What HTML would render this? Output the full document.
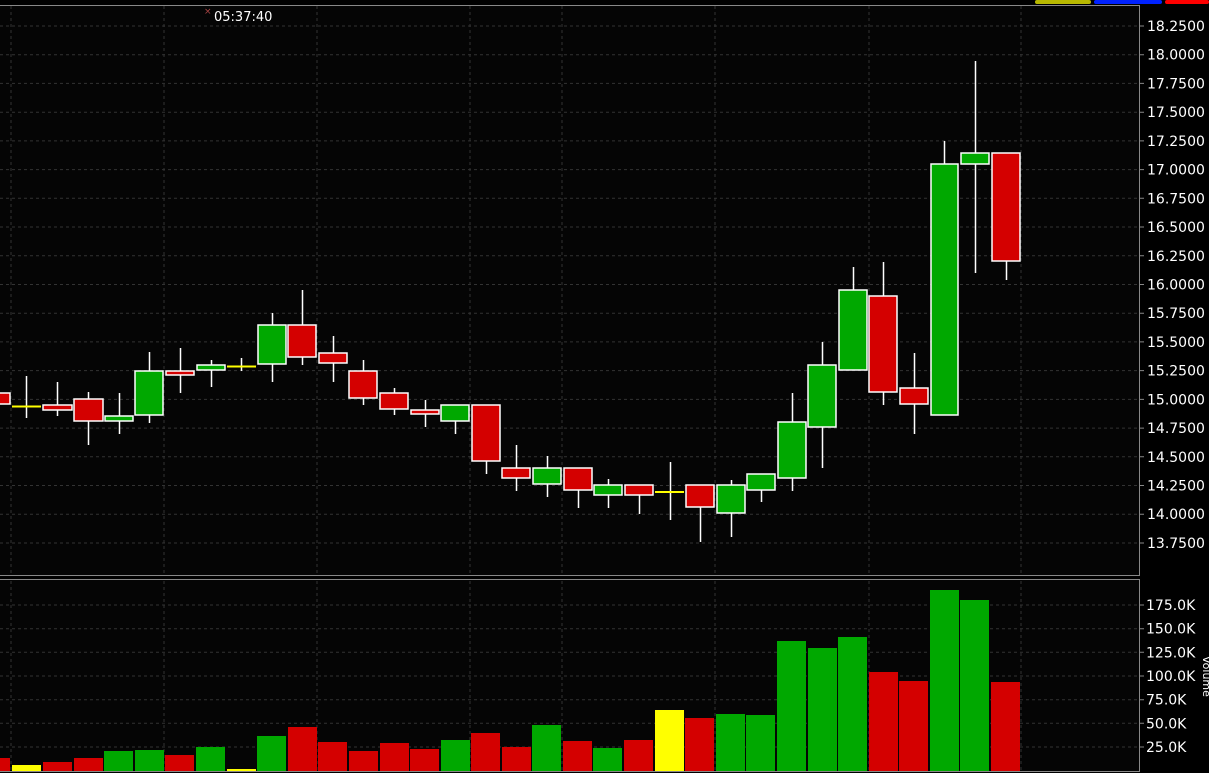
<!DOCTYPE html><html><head><style>body{margin:0;background:#000;overflow:hidden}svg{display:block}text{font-family:"DejaVu Sans","Liberation Sans",sans-serif;fill:#fff}</style></head><body>
<svg width="1209" height="773" xmlns="http://www.w3.org/2000/svg">
<rect width="1209" height="773" fill="#000"/>
<rect x="0" y="5" width="1139" height="570" fill="#050505"/>
<rect x="0" y="580" width="1139" height="191" fill="#050505"/>
<g stroke="#333" stroke-dasharray="3,3" stroke-width="1">
<path d="M11 6V575M164 6V575M317 6V575M470 6V575M562 6V575M715 6V575M869 6V575M1021 6V575M11 581V771M164 581V771M317 581V771M470 581V771M562 581V771M715 581V771M869 581V771M1021 581V771"/>
<path d="M0 26H1139M0 54.7H1139M0 83.4H1139M0 112.2H1139M0 140.9H1139M0 169.6H1139M0 198.3H1139M0 227H1139M0 255.8H1139M0 284.5H1139M0 313.2H1139M0 341.9H1139M0 370.6H1139M0 399.4H1139M0 428.1H1139M0 456.8H1139M0 485.5H1139M0 514.2H1139M0 543H1139"/>
<path d="M0 747H1139M0 723.3H1139M0 699.7H1139M0 676H1139M0 652.3H1139M0 628.7H1139M0 605H1139"/>
</g>
<g stroke="#888" fill="none"><path d="M0 5.5H1139.5V575.5H0"/><path d="M0 579.5H1139.5V771.5H0"/></g>
<rect x="1035" y="0" width="56" height="4" rx="2" fill="#b8b800"/><rect x="1094" y="0" width="68" height="4" rx="2" fill="#0022ff"/><rect x="1165" y="0" width="44" height="4" rx="2" fill="#ff0000"/>
<text x="204" y="14" font-size="9" fill="#a44" style="fill:#a44">×</text>
<text x="214" y="21" font-size="13">05:37:40</text>
<g font-size="14">
<text x="1147" y="31">18.2500</text><text x="1147" y="59.7">18.0000</text><text x="1147" y="88.4">17.7500</text><text x="1147" y="117.2">17.5000</text><text x="1147" y="145.9">17.2500</text><text x="1147" y="174.6">17.0000</text><text x="1147" y="203.3">16.7500</text><text x="1147" y="232">16.5000</text><text x="1147" y="260.8">16.2500</text><text x="1147" y="289.5">16.0000</text><text x="1147" y="318.2">15.7500</text><text x="1147" y="346.9">15.5000</text><text x="1147" y="375.6">15.2500</text><text x="1147" y="404.4">15.0000</text><text x="1147" y="433.1">14.7500</text><text x="1147" y="461.8">14.5000</text><text x="1147" y="490.5">14.2500</text><text x="1147" y="519.2">14.0000</text><text x="1147" y="548">13.7500</text>
<text x="1146" y="610">175.0K</text><text x="1146" y="633.7">150.0K</text><text x="1146" y="657.3">125.0K</text><text x="1146" y="681">100.0K</text><text x="1146" y="704.7">75.0K</text><text x="1146" y="728.3">50.0K</text><text x="1146" y="752">25.0K</text>
</g>
<text transform="translate(1203,656) rotate(90)" font-size="11">Volume</text>
<g stroke="#888"><path d="M1139 26h5M1139 54.7h5M1139 83.4h5M1139 112.2h5M1139 140.9h5M1139 169.6h5M1139 198.3h5M1139 227h5M1139 255.8h5M1139 284.5h5M1139 313.2h5M1139 341.9h5M1139 370.6h5M1139 399.4h5M1139 428.1h5M1139 456.8h5M1139 485.5h5M1139 514.2h5M1139 543h5M1139 605h5M1139 628.7h5M1139 652.3h5M1139 676h5M1139 699.7h5M1139 723.3h5M1139 747h5"/></g>
<!-- volume -->
<g>
<rect x="0" y="758" width="10" height="13" fill="#d40000"/>
<rect x="12" y="765" width="29" height="6" fill="#ffff00"/>
<rect x="43" y="762" width="29" height="9" fill="#d40000"/>
<rect x="74" y="758" width="29" height="13" fill="#d40000"/>
<rect x="104" y="751" width="29" height="20" fill="#00a800"/>
<rect x="135" y="750" width="29" height="21" fill="#00a800"/>
<rect x="165" y="755" width="29" height="16" fill="#d40000"/>
<rect x="196" y="747" width="29" height="24" fill="#00a800"/>
<rect x="227" y="769" width="29" height="2" fill="#ffff00"/>
<rect x="257" y="736" width="29" height="35" fill="#00a800"/>
<rect x="288" y="727" width="29" height="44" fill="#d40000"/>
<rect x="318" y="742" width="29" height="29" fill="#d40000"/>
<rect x="349" y="751" width="29" height="20" fill="#d40000"/>
<rect x="380" y="743" width="29" height="28" fill="#d40000"/>
<rect x="410" y="749" width="29" height="22" fill="#d40000"/>
<rect x="441" y="740" width="29" height="31" fill="#00a800"/>
<rect x="471" y="733" width="29" height="38" fill="#d40000"/>
<rect x="502" y="747" width="29" height="24" fill="#d40000"/>
<rect x="532" y="725" width="29" height="46" fill="#00a800"/>
<rect x="563" y="741" width="29" height="30" fill="#d40000"/>
<rect x="593" y="748" width="29" height="23" fill="#00a800"/>
<rect x="624" y="740" width="29" height="31" fill="#d40000"/>
<rect x="655" y="710" width="29" height="61" fill="#ffff00"/>
<rect x="685" y="718" width="29" height="53" fill="#d40000"/>
<rect x="716" y="714" width="29" height="57" fill="#00a800"/>
<rect x="746" y="715" width="29" height="56" fill="#00a800"/>
<rect x="777" y="641" width="29" height="130" fill="#00a800"/>
<rect x="808" y="648" width="29" height="123" fill="#00a800"/>
<rect x="838" y="637" width="29" height="134" fill="#00a800"/>
<rect x="869" y="672" width="29" height="99" fill="#d40000"/>
<rect x="899" y="681" width="29" height="90" fill="#d40000"/>
<rect x="930" y="590" width="29" height="181" fill="#00a800"/>
<rect x="960" y="600" width="29" height="171" fill="#00a800"/>
<rect x="991" y="682" width="29" height="89" fill="#d40000"/>
</g>
<!-- candles -->
<g stroke="#fff" stroke-width="1.5">
<path d="M26.5 376V418M57.5 382V416M88.5 392V445M119.5 393V434M149.5 352V423M180.5 348V393M211.5 360V387M241.5 358V371M272.5 313V382M302.5 290V365M333.5 336V382M363.5 360V405M394.5 388V415M425.5 400V427M455.5 405V434M486.5 405V474M516.5 445V491M547.5 456V497M578.5 468V508M608.5 479V508M639.5 485V514M670.5 462V520M700.5 485V542M731.5 480V537M761.5 474V502M792.5 393V491M822.5 342V468M853.5 267V370M883.5 262V405M914.5 353V434M944.5 141V415M975.5 61V273M1006.5 153V280"/>
</g>
<g stroke="#fff" stroke-width="1.5">
<rect x="-5" y="393" width="15" height="11" fill="#d40000"/>
<rect x="12" y="405.5" width="29" height="2" fill="#ffff00" stroke="none"/>
<rect x="43" y="405" width="29" height="5" fill="#d40000"/>
<rect x="74" y="399" width="29" height="22" fill="#d40000"/>
<rect x="105" y="416" width="28" height="5" fill="#00a800"/>
<rect x="135" y="371" width="28" height="44" fill="#00a800"/>
<rect x="166" y="371" width="28" height="4" fill="#d40000"/>
<rect x="197" y="365" width="28" height="5" fill="#00a800"/>
<rect x="227" y="365.5" width="29" height="2" fill="#ffff00" stroke="none"/>
<rect x="258" y="325" width="28" height="39" fill="#00a800"/>
<rect x="288" y="325" width="28" height="32" fill="#d40000"/>
<rect x="319" y="353" width="28" height="10" fill="#d40000"/>
<rect x="349" y="371" width="28" height="27" fill="#d40000"/>
<rect x="380" y="393" width="28" height="16" fill="#d40000"/>
<rect x="411" y="410" width="28" height="4" fill="#d40000"/>
<rect x="441" y="405" width="28" height="16" fill="#00a800"/>
<rect x="472" y="405" width="28" height="56" fill="#d40000"/>
<rect x="502" y="468" width="28" height="10" fill="#d40000"/>
<rect x="533" y="468" width="28" height="16" fill="#00a800"/>
<rect x="564" y="468" width="28" height="22" fill="#d40000"/>
<rect x="594" y="485" width="28" height="10" fill="#00a800"/>
<rect x="625" y="485" width="28" height="10" fill="#d40000"/>
<rect x="655" y="491" width="29" height="2" fill="#ffff00" stroke="none"/>
<rect x="686" y="485" width="28" height="22" fill="#d40000"/>
<rect x="717" y="485" width="28" height="28" fill="#00a800"/>
<rect x="747" y="474" width="28" height="16" fill="#00a800"/>
<rect x="778" y="422" width="28" height="56" fill="#00a800"/>
<rect x="808" y="365" width="28" height="62" fill="#00a800"/>
<rect x="839" y="290" width="28" height="80" fill="#00a800"/>
<rect x="869" y="296" width="28" height="96" fill="#d40000"/>
<rect x="900" y="388" width="28" height="16" fill="#d40000"/>
<rect x="931" y="164" width="27" height="251" fill="#00a800"/>
<rect x="961" y="153" width="28" height="11" fill="#00a800"/>
<rect x="992" y="153" width="28" height="108" fill="#d40000"/>
</g>
</svg></body></html>
